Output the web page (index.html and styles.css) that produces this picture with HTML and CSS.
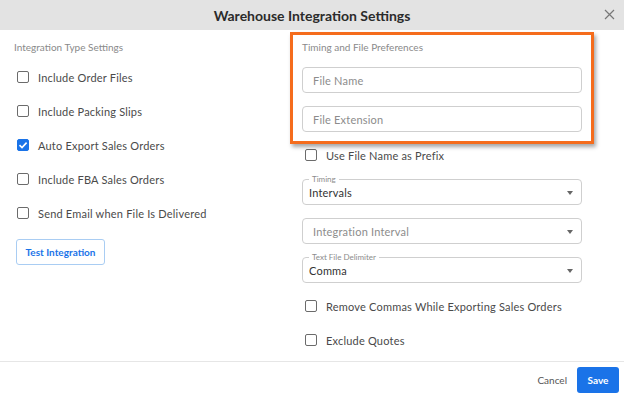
FILE: index.html
```html
<!DOCTYPE html>
<html lang="en">
<head>
    <meta charset="UTF-8">
    <title>Warehouse Integration Settings</title>
    <link rel="stylesheet" href="styles.css">
</head>
<body>

<div class="modal">
    <div class="modal-header">
        <span class="modal-title">Warehouse Integration Settings</span>
        <button class="close-button" aria-label="Close">
            <svg width="11" height="11" viewBox="0 0 11 11">
                <path d="M1 1 L10 10 M10 1 L1 10" stroke="#777" stroke-width="1.2" fill="none"/>
            </svg>
        </button>
    </div>

    <div class="modal-body">
        <div class="left-col">
            <div class="section-title">Integration Type Settings</div>

            <label class="check-row"><span class="box"></span>Include Order Files</label>
            <label class="check-row"><span class="box"></span>Include Packing Slips</label>
            <label class="check-row"><span class="box checked">
                <svg width="10" height="10" viewBox="0 0 10 10"><path d="M1.5 5.2 L4 7.6 L8.6 2.6" stroke="#fff" stroke-width="1.6" fill="none"/></svg>
            </span>Auto Export Sales Orders</label>
            <label class="check-row"><span class="box"></span>Include FBA Sales Orders</label>
            <label class="check-row"><span class="box"></span>Send Email when File Is Delivered</label>

            <button class="test-button">Test Integration</button>
        </div>

        <div class="right-col">
            <div class="highlight">
                <div class="section-title">Timing and File Preferences</div>
                <div class="field first"><span class="placeholder">File Name</span></div>
                <div class="field"><span class="placeholder">File Extension</span></div>
            </div>

            <label class="check-row short"><span class="box"></span>Use File Name as Prefix</label>

            <div class="field select">
                <span class="legend">Timing</span>
                <span class="value">Intervals</span>
                <span class="caret"></span>
            </div>
            <div class="field select">
                <span class="placeholder">Integration Interval</span>
                <span class="caret"></span>
            </div>
            <div class="field select">
                <span class="legend">Text File Delimiter</span>
                <span class="value">Comma</span>
                <span class="caret"></span>
            </div>

            <label class="check-row lower"><span class="box"></span>Remove Commas While Exporting Sales Orders</label>
            <label class="check-row"><span class="box"></span>Exclude Quotes</label>
        </div>
    </div>

    <div class="modal-footer">
        <button class="cancel-button">Cancel</button>
        <button class="save-button">Save</button>
    </div>
</div>

</body>
</html>
```

FILE: styles.css
```css
* {
    margin: 0;
    padding: 0;
    box-sizing: border-box;
    font-family: Lato, "Open Sans", Arial, sans-serif;
}
body {
    background: #fff;
}
.modal {
    width: 624px;
    height: 396px;
    background: #fff;
    display: flex;
    flex-direction: column;
}
.modal-header {
    height: 30px;
    background: #e3e3e3;
    display: flex;
    align-items: center;
    justify-content: center;
    position: relative;
}
.modal-title {
    font-size: 14px;
    font-weight: bold;
    color: #2b2b2b;
}
.close-button {
    position: absolute;
    right: 9px;
    top: 9px;
    border: none;
    background: none;
    width: 11px;
    height: 11px;
    display: flex;
}

.modal-body {
    height: 331px;
    display: flex;
    padding: 10px 0 0 14px;
}
.left-col {
    width: 288px;
    display: flex;
    flex-direction: column;
    align-items: flex-start;
}
.right-col {
    width: 280px;
    display: flex;
    flex-direction: column;
}
.section-title {
    font-size: 10px;
    line-height: 14px;
    color: #8a8a8a;
}
.left-col .section-title {
    margin-bottom: 6px;
}

/* checkbox rows */
.check-row {
    height: 34px;
    display: flex;
    align-items: center;
    font-size: 11px;
    color: #4a4a4a;
    letter-spacing: 0.2px;
}
.box {
    width: 12px;
    height: 12px;
    border: 1.5px solid #6b6b6b;
    border-radius: 2px;
    margin: 0 9px 0 3px;
    display: flex;
    align-items: center;
    justify-content: center;
}
.box.checked {
    background: #1a73e8;
    border-color: #1a73e8;
}
.test-button {
    margin-top: 9px;
    margin-left: 2px;
    width: 89px;
    height: 26px;
    border: 1px solid #a9cdf3;
    border-radius: 3px;
    background: #fff;
    color: #1a73e8;
    font-size: 10px;
    font-weight: bold;
}

/* highlighted group */
.highlight {
    position: relative;
}
.highlight::after {
    content: "";
    position: absolute;
    left: -12px;
    right: -12px;
    top: -8px;
    bottom: -12px;
    border: 3px solid #f56c1c;
    box-shadow: 2px 3px 4px rgba(0, 0, 0, 0.35);
    pointer-events: none;
}

/* inputs and selects */
.field {
    height: 26px;
    border: 1px solid #cfcfcf;
    border-radius: 4px;
    display: flex;
    align-items: center;
    padding-left: 10px;
    margin-top: 13px;
    position: relative;
    font-size: 11px;
}
.placeholder {
    color: #8c8c8c;
    letter-spacing: 0.2px;
}
.field.select {
    margin-top: 13px;
}
.check-row.short {
    height: 24px;
    margin-top: 11px;
    margin-bottom: -1px;
}
.value {
    color: #333;
    margin-left: -4px;
    letter-spacing: 0.2px;
}
.legend {
    position: absolute;
    left: 6px;
    top: -6px;
    padding: 0 3px;
    background: #fff;
    font-size: 8px;
    line-height: 10px;
    color: #8c8c8c;
}
.caret {
    position: absolute;
    right: 8px;
    top: 11px;
    width: 0;
    height: 0;
    border-left: 3.5px solid transparent;
    border-right: 3.5px solid transparent;
    border-top: 4px solid #666;
}
.check-row.lower {
    margin-top: 6px;
}

/* footer */
.modal-footer {
    flex: 1;
    border-top: 1px solid #e6e6e6;
    display: flex;
    justify-content: flex-end;
    align-items: flex-start;
    padding: 5px 5px 0 0;
    gap: 10px;
}
.cancel-button {
    height: 26px;
    border: none;
    background: none;
    color: #555;
    font-size: 10px;
}
.save-button {
    width: 42px;
    height: 26px;
    border: none;
    border-radius: 3px;
    background: #1a73e8;
    color: #fff;
    font-size: 10px;
    font-weight: bold;
}
```
